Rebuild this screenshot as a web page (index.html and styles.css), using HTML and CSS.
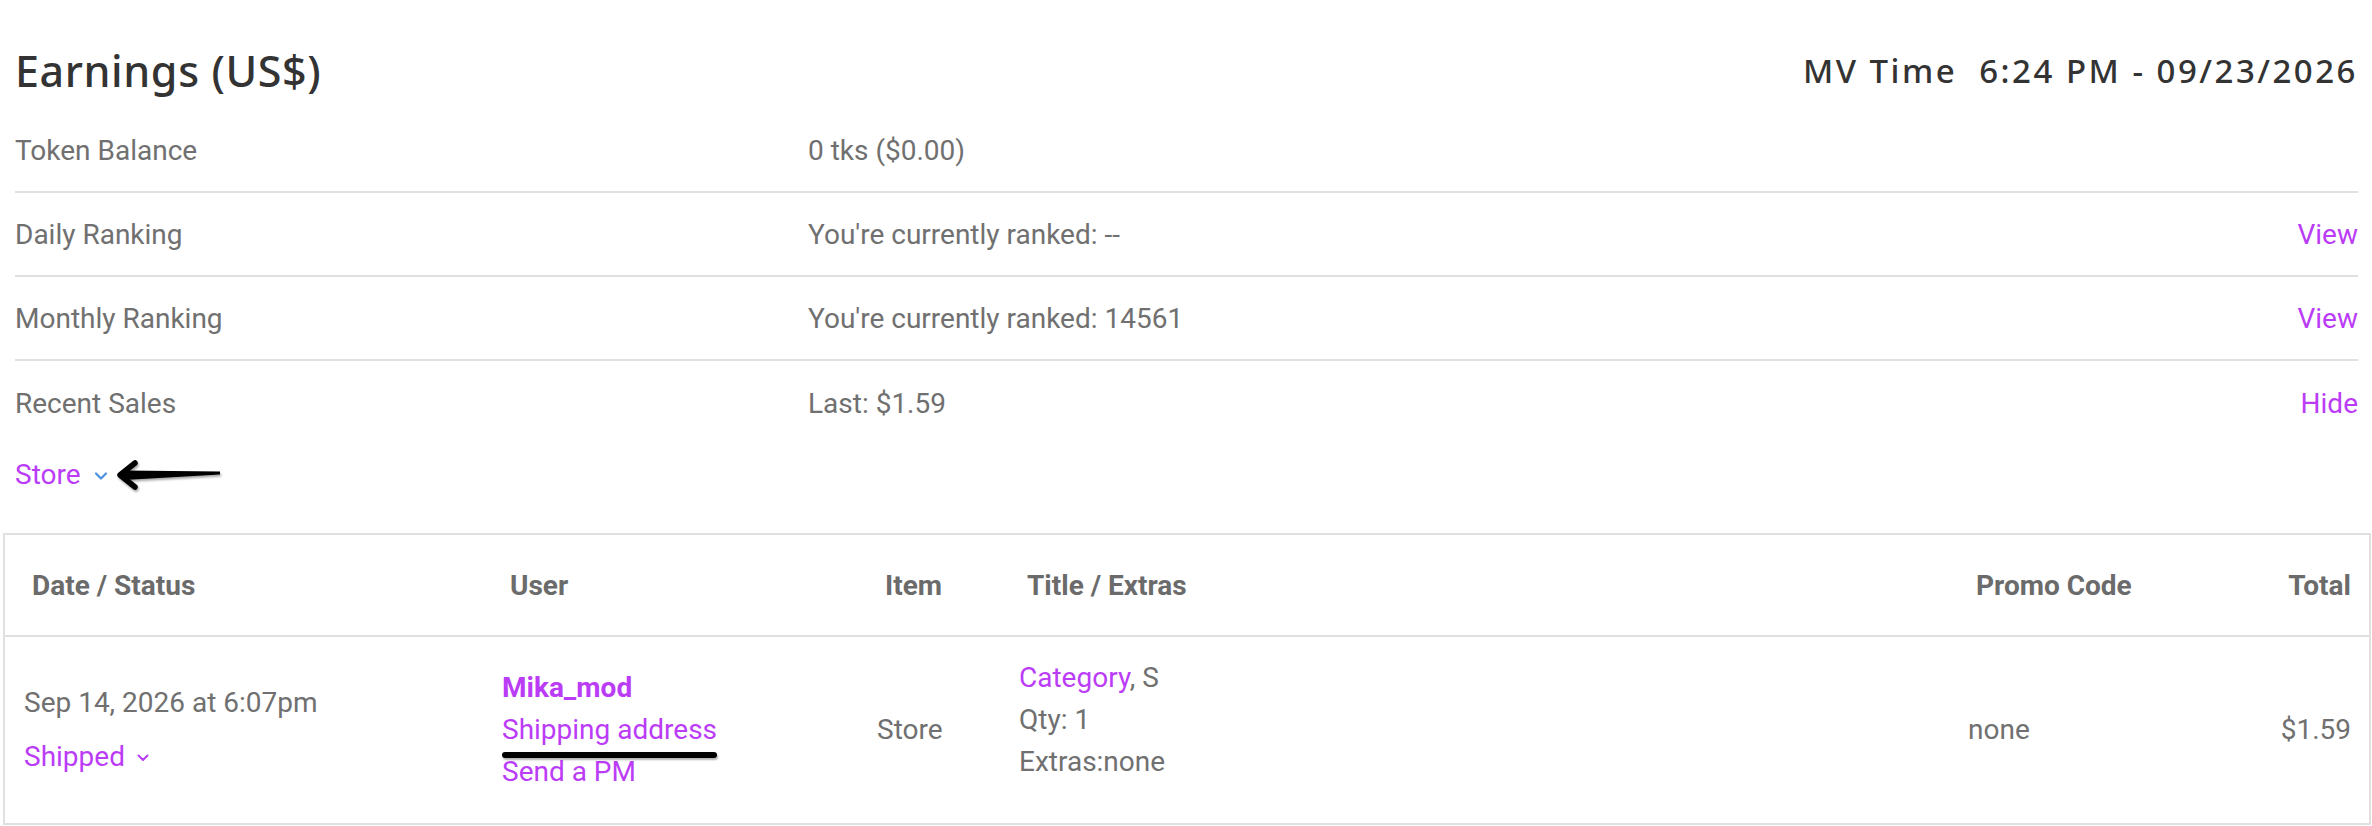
FILE: index.html
```html
<!doctype html>
<html lang="en">
<head>
	<meta charset="UTF-8">
	<title>Earnings</title>
	<link rel="stylesheet" href="styles.css">
</head>
<body>
	<div class="page">
		<div class="head">
			<h1 class="title">Earnings (US$)</h1>
			<div class="clock">
				<span>MV Time</span>
				<span>6:24 PM - 09/23/2026</span>
			</div>
		</div>

		<div class="summary">
			<div class="row">
				<span class="label">Token Balance</span>
				<span class="value">0 tks ($0.00)</span>
				<span></span>
			</div>
			<div class="row">
				<span class="label">Daily Ranking</span>
				<span class="value">You're currently ranked: --</span>
				<a class="link" href="javascript:void(0);">View</a>
			</div>
			<div class="row">
				<span class="label">Monthly Ranking</span>
				<span class="value">You're currently ranked: 14561</span>
				<a class="link" href="javascript:void(0);">View</a>
			</div>
			<div class="row last">
				<span class="label">Recent Sales</span>
				<span class="value">Last: $1.59</span>
				<a class="link" href="javascript:void(0);">Hide</a>
			</div>
		</div>

		<div class="store-toggle">
			<a class="link" href="javascript:void(0);">Store</a>
			<svg class="chev blue" width="14" height="10" viewBox="0 0 14 10"><path d="M2 2.5 L7 7.5 L12 2.5" fill="none" stroke="#4a8fe0" stroke-width="2.2" stroke-linecap="round" stroke-linejoin="round"/></svg>
			<!-- annotation arrow -->
			<svg class="arrow" width="108" height="36" viewBox="0 0 108 36">
				<defs>
					<filter id="sh" x="-10%" y="-30%" width="120%" height="160%">
						<feDropShadow dx="1" dy="2" stdDeviation="1.2" flood-color="#000" flood-opacity="0.35"/>
					</filter>
				</defs>
				<g filter="url(#sh)">
					<polygon points="8,12.5 104,13.5 104,16.5 8,22" fill="#000"/>
					<path d="M19 5 L4 17 L19 29" fill="none" stroke="#000" stroke-width="5.5" stroke-linecap="round" stroke-linejoin="round"/>
				</g>
			</svg>
		</div>
	</div>

	<table class="sales">
		<colgroup>
			<col class="c-date">
			<col class="c-user">
			<col class="c-item">
			<col class="c-title">
			<col class="c-promo">
			<col class="c-total">
		</colgroup>
		<thead>
			<tr>
				<th>Date / Status</th>
				<th>User</th>
				<th>Item</th>
				<th>Title / Extras</th>
				<th>Promo Code</th>
				<th class="num">Total</th>
			</tr>
		</thead>
		<tbody>
			<tr>
				<td>
					<div>Sep 14, 2026 at 6:07pm</div>
					<div class="status">
						<a class="link" href="javascript:void(0);">Shipped</a>
						<svg class="chev" width="14" height="10" viewBox="0 0 14 10"><path d="M2.5 2.5 L7 7 L11.5 2.5" fill="none" stroke="#bb3cf6" stroke-width="2" stroke-linecap="round" stroke-linejoin="round"/></svg>
					</div>
				</td>
				<td class="stack">
					<a class="link strong" href="javascript:void(0);">Mika_mod</a>
					<a class="link marked" href="javascript:void(0);">Shipping address</a>
					<a class="link" href="javascript:void(0);">Send a PM</a>
				</td>
				<td>Store</td>
				<td class="stack up">
					<span><a class="link" href="javascript:void(0);">Category</a>, S</span>
					<span>Qty: 1</span>
					<span>Extras:none</span>
				</td>
				<td>none</td>
				<td class="num">$1.59</td>
			</tr>
		</tbody>
	</table>
</body>
</html>
```

FILE: styles.css
```css
body {
	margin: 0;
	background-color: #fff;
	font-family: Roboto, "Liberation Sans", sans-serif;
	font-size: 28px;
	color: #707070;
}
a {
	text-decoration: none;
}
.link {
	color: #bb3cf6;
}
.page {
	padding: 0 14px 0 15px;
}
.head {
	display: flex;
	align-items: center;
	justify-content: space-between;
	height: 78px;
	padding-top: 31px;
}
.title {
	margin: 0;
	font-family: "Noto Sans", sans-serif;
	font-weight: 500;
	font-size: 43px;
	letter-spacing: 0.6px;
	color: #333;
}
.clock {
	display: flex;
	gap: 22px;
	font-family: "Noto Sans", sans-serif;
	font-weight: 500;
	font-size: 33px;
	letter-spacing: 2.5px;
	color: #333;
}
.row {
	display: grid;
	grid-template-columns: 793px 1fr auto;
	align-items: center;
	height: 82px;
	border-bottom: 2px solid #e0e0e0;
}
.row.last {
	border-bottom: 0;
	height: 84px;
}
.store-toggle {
	display: flex;
	align-items: center;
	height: 58px;
	margin-bottom: 30px;
}
.chev.blue {
	margin-left: 13px;
	margin-top: 4px;
}
.arrow {
	margin-left: 8px;
	margin-top: 4px;
}
.sales {
	margin-left: 3px;
	width: 2368px;
	table-layout: fixed;
	border-collapse: separate;
	border-spacing: 0;
	border: 2px solid #e0e0e0;
}
.c-date { width: 478px; }
.c-user { width: 375px; }
.c-item { width: 142px; }
.c-title { width: 949px; }
.c-promo { width: 251px; }
.sales th {
	height: 100px;
	padding: 0 18px 0 27px;
	text-align: left;
	font-weight: 700;
	color: #6b6b6b;
	border-bottom: 2px solid #e0e0e0;
}
.sales tbody tr {
	height: 186px;
}
.sales td {
	padding: 0 18px 0 19px;
	line-height: 42px;
	vertical-align: middle;
}
.sales .num {
	text-align: right;
}
.status {
	display: flex;
	align-items: center;
	margin-top: 12px;
}
.status .chev {
	margin-left: 11px;
	margin-top: 2px;
}
.stack > span,
.stack > a {
	display: block;
}
.stack > a.marked {
	display: inline-block;
	position: relative;
}
.marked::after {
	content: "";
	position: absolute;
	left: 0;
	right: 0;
	bottom: -7px;
	height: 6px;
	border-radius: 3px;
	background-color: #000;
	box-shadow: 1px 2px 2px rgba(0,0,0,.3);
}
.strong {
	font-weight: 700;
}
.sales td.up {
	padding-bottom: 20px;
}
```
